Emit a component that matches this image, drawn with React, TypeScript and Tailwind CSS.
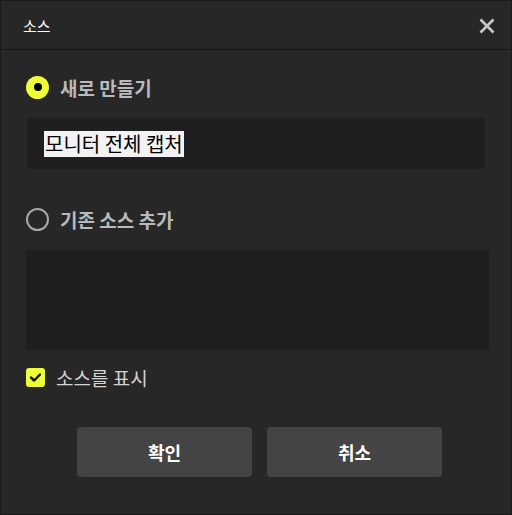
import React from "react";

const font = { fontFamily: '"Noto Sans CJK KR", "Noto Sans", sans-serif' };

export default function App() {
  return (
    <div
      style={font}
      className="w-[512px] h-[515px] bg-[#272727] border border-[#1a1a1a] flex flex-col box-border overflow-hidden"
    >
      <div className="h-[49px] shrink-0 border-b border-[#161616] flex items-center justify-between pl-[22px] pr-[16px]">
        <span className="text-[15px] text-white leading-none">소스</span>
        <svg width="16" height="16" viewBox="0 0 16 16" className="mt-[1px]">
          <path d="M1.5 1.5 L14.5 14.5 M14.5 1.5 L1.5 14.5" stroke="#c9c9c9" strokeWidth="2.6" strokeLinecap="butt" />
        </svg>
      </div>

      <div className="flex flex-col pl-[25px]">
        <div className="mt-[25px] flex items-center h-[24px]">
          <div className="w-[23px] h-[23px] rounded-full bg-[#efff36] flex items-center justify-center">
            <div className="w-[8px] h-[8px] rounded-full bg-black" />
          </div>
          <span className="ml-[11px] text-[19px] font-bold text-[#b9b9b9] leading-none">새로 만들기</span>
        </div>

        <div className="mt-[19px] ml-[1px] w-[458px] h-[51px] rounded-[3px] bg-[#1f1f1f] flex items-center pl-[17px]">
          <span className="bg-[#f2f2f2] text-black text-[20px] leading-[26px] h-[26px] px-[1px]">모니터 전체 캡처</span>
        </div>

        <div className="mt-[38px] flex items-center h-[24px]">
          <div className="w-[23px] h-[23px] rounded-full border-2 border-[#a8a8a8]" />
          <span className="ml-[11px] text-[19px] font-bold text-[#b9b9b9] leading-none">기존 소스 추가</span>
        </div>

        <div className="mt-[19px] w-[463px] h-[100px] rounded-[3px] bg-[#1f1f1f]" />

        <div className="mt-[18px] flex items-center h-[19px]">
          <div className="w-[19px] h-[19px] rounded-[3px] bg-[#efff36] flex items-center justify-center">
            <svg width="13" height="13" viewBox="0 0 13 13">
              <path d="M2 6.5 L5.2 9.5 L11 3.5" stroke="#111" strokeWidth="2.4" fill="none" strokeLinecap="round" strokeLinejoin="round" />
            </svg>
          </div>
          <span className="ml-[11px] text-[19px] text-[#d4d4d4] leading-none">소스를 표시</span>
        </div>
      </div>

      <div className="mt-[40px] flex justify-center gap-[15px] pl-[7px]">
        <button className="w-[175px] h-[50px] rounded-[4px] bg-[#444444] text-white text-[18px] font-bold">확인</button>
        <button className="w-[175px] h-[50px] rounded-[4px] bg-[#444444] text-white text-[18px] font-bold">취소</button>
      </div>
    </div>
  );
}
